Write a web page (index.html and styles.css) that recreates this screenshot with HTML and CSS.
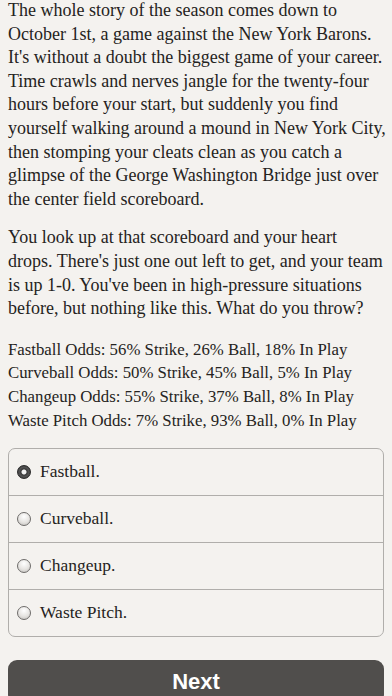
FILE: index.html
```html
<!DOCTYPE html>
<html lang="en">
<head>
    <meta charset="UTF-8">
    <title>The Big Game</title>
    <link rel="stylesheet" href="styles.css">
</head>
<body>
    <div class="story">
        <p>The whole story of the season comes down to<br>
        October 1st, a game against the New York Barons.<br>
        It's without a doubt the biggest game of your career.<br>
        Time crawls and nerves jangle for the twenty-four<br>
        hours before your start, but suddenly you find<br>
        yourself walking around a mound in New York City,<br>
        then stomping your cleats clean as you catch a<br>
        glimpse of the George Washington Bridge just over<br>
        the center field scoreboard.</p>

        <p>You look up at that scoreboard and your heart<br>
        drops. There's just one out left to get, and your team<br>
        is up 1-0. You've been in high-pressure situations<br>
        before, but nothing like this. What do you throw?</p>

        <p class="odds">Fastball Odds: 56% Strike, 26% Ball, 18% In Play<br>
        Curveball Odds: 50% Strike, 45% Ball, 5% In Play<br>
        Changeup Odds: 55% Strike, 37% Ball, 8% In Play<br>
        Waste Pitch Odds: 7% Strike, 93% Ball, 0% In Play</p>
    </div>

    <div class="choices">
        <label class="choice">
            <input type="radio" name="pitch" value="fastball" checked>
            <span class="dot"></span>
            <span class="choice-text">Fastball.</span>
        </label>
        <label class="choice">
            <input type="radio" name="pitch" value="curveball">
            <span class="dot"></span>
            <span class="choice-text">Curveball.</span>
        </label>
        <label class="choice">
            <input type="radio" name="pitch" value="changeup">
            <span class="dot"></span>
            <span class="choice-text">Changeup.</span>
        </label>
        <label class="choice">
            <input type="radio" name="pitch" value="waste">
            <span class="dot"></span>
            <span class="choice-text">Waste Pitch.</span>
        </label>
    </div>

    <button class="next-btn">Next</button>
</body>
</html>
```

FILE: styles.css
```css
body {
    margin: 0;
    padding: 0 8px;
    background: #f4f2ef;
    color: #252321;
    font-family: "Liberation Serif", serif;
    font-size: 18px;
    line-height: 23.6px;
}

.story p {
    margin: 0 0 15px 0;
    white-space: nowrap;
}

.story p:first-child {
    margin-top: -1px;
}

.odds {
    padding-top: 2px;
    font-size: 16.8px;
}

.choices {
    margin-top: 16px;
    border: 1px solid #b0aeab;
    border-radius: 7px;
    overflow: hidden;
}

.choice {
    display: flex;
    align-items: center;
    gap: 9px;
    height: 46px;
    padding: 0 0 0 8px;
    border-bottom: 1px solid #b0aeab;
    font-size: 17.5px;
    cursor: pointer;
}

.choice:last-child {
    border-bottom: none;
}

.choice input {
    display: none;
}

.dot {
    width: 12px;
    height: 12px;
    border-radius: 50%;
    border: 1px solid #6e6c6a;
    background: radial-gradient(circle at 50% 30%, #ffffff 0%, #e6e4e1 55%, #bdbbb8 100%);
    flex-shrink: 0;
}

.choice input:checked + .dot {
    border-color: #2a2a2a;
    background: radial-gradient(circle, #f2f2f2 0, #f2f2f2 2px, #3a3a3a 3px, #555 5px, #2a2a2a 7px);
}

.next-btn {
    display: block;
    width: 100%;
    height: 44px;
    margin-top: 23px;
    border: none;
    border-radius: 9px;
    background: #504e4c;
    color: #ffffff;
    font-family: "Liberation Sans", Arial, sans-serif;
    font-weight: bold;
    font-size: 22px;
    cursor: pointer;
}
```
